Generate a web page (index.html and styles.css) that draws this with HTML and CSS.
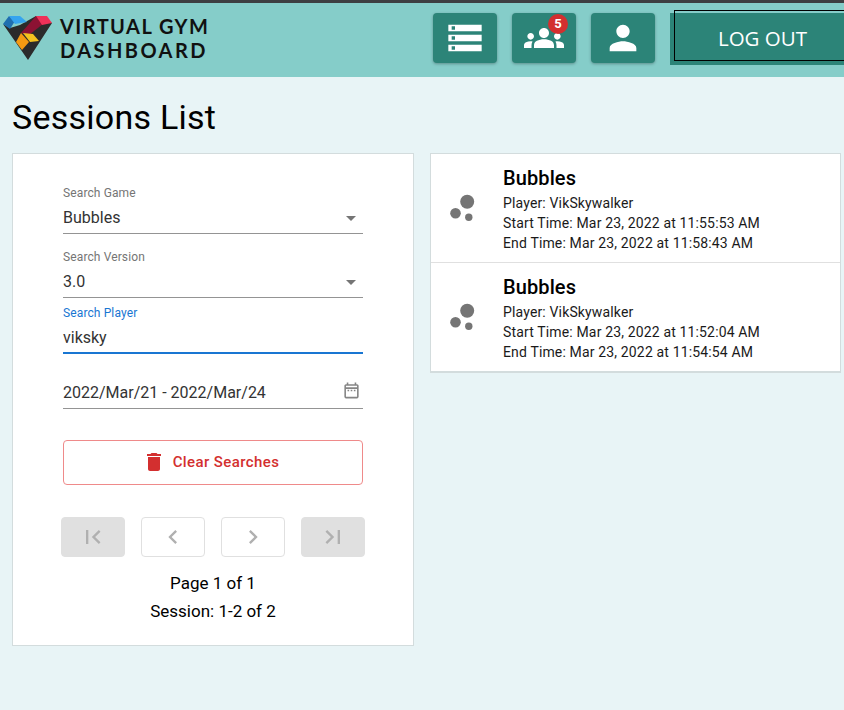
FILE: index.html
```html
<!DOCTYPE html>
<html>
<head>
    <meta charset="utf-8">
    <meta name="viewport" content="width=device-width, initial-scale=1">
    <title>Virtual Gym Dashboard</title>
    <link rel="stylesheet" href="styles.css">
</head>
<body>
    <header>
        <div class="brand">
            <svg class="brand-logo" viewBox="0 0 56 64" width="56" height="64">
                <polygon fill="#2b2b2b" points="3,24 10,28 20,25 36,16 52,23 28,60"/>
                <polygon fill="#1f6fb0" points="3,24 9,16 15,21 10,29"/>
                <polygon fill="#35a4ef" points="9,16 20,16 27,22 15,24"/>
                <polygon fill="#8c1233" points="36,16 43,24 29,35 21,33"/>
                <polygon fill="#ee3158" points="36,16 47,16 52,23 42,25"/>
                <polygon fill="#f59a12" points="21,33 29,42 22,50 16,42"/>
                <polygon fill="#f4c21f" points="23,33 33,34 39,41 30,42"/>
            </svg>
            <div class="brand-name">
                <div class="brand-top">VIRTUAL GYM</div>
                <div class="brand-bottom">DASHBOARD</div>
            </div>
        </div>
        <nav>
            <button class="nav-btn">
                <svg viewBox="0 0 24 24"><path d="M2 20h20v-4H2v4zm2-3h2v2H4v-2zM2 4v4h20V4H2zm4 3H4V5h2v2zm-4 7h20v-4H2v4zm2-3h2v2H4v-2z"/></svg>
            </button>
            <button class="nav-btn">
                <svg viewBox="0 0 24 24"><path d="M12 12.75c1.63 0 3.07.39 4.24.9 1.08.48 1.76 1.56 1.76 2.73V18H6v-1.61c0-1.18.68-2.26 1.76-2.73 1.17-.52 2.61-.91 4.24-.91zM4 13c1.1 0 2-.9 2-2s-.9-2-2-2-2 .9-2 2 .9 2 2 2zm1.13 1.1c-.37-.06-.74-.1-1.13-.1-.99 0-1.93.21-2.78.58C.48 14.9 0 15.62 0 16.43V18h4.5v-1.61c0-.83.23-1.61.63-2.29zM20 13c1.1 0 2-.9 2-2s-.9-2-2-2-2 .9-2 2 .9 2 2 2zm4 3.43c0-.81-.48-1.53-1.22-1.85-.85-.37-1.79-.58-2.78-.58-.39 0-.76.04-1.13.1.4.68.63 1.46.63 2.29V18H24v-1.57zM12 6c1.66 0 3 1.34 3 3s-1.34 3-3 3-3-1.34-3-3 1.34-3 3-3z"/></svg>
                <span class="badge">5</span>
            </button>
            <button class="nav-btn">
                <svg viewBox="0 0 24 24"><path d="M12 12c2.21 0 4-1.79 4-4s-1.79-4-4-4-4 1.79-4 4 1.79 4 4 4zm0 2c-2.67 0-8 1.34-8 4v2h16v-2c0-2.66-5.33-4-8-4z"/></svg>
            </button>
            <button class="logout">LOG OUT</button>
        </nav>
    </header>

    <main>
        <h1>Sessions List</h1>
        <div class="columns">
            <section class="card filters">
                <div class="field">
                    <label>Search Game</label>
                    <div class="value">
                        <span>Bubbles</span>
                        <svg class="icon" viewBox="0 0 24 24"><path d="M7 10l5 5 5-5z"/></svg>
                    </div>
                </div>
                <div class="field tight">
                    <label>Search Version</label>
                    <div class="value">
                        <span>3.0</span>
                        <svg class="icon" viewBox="0 0 24 24"><path d="M7 10l5 5 5-5z"/></svg>
                    </div>
                </div>
                <div class="field focused">
                    <label>Search Player</label>
                    <div class="value"><span>viksky</span></div>
                </div>
                <div class="field date">
                    <div class="value">
                        <span>2022/Mar/21 - 2022/Mar/24</span>
                        <svg class="icon calendar" viewBox="0 0 24 24"><path d="M7 11h2v2H7v-2zm14-5v14c0 1.1-.9 2-2 2H5c-1.11 0-2-.9-2-2l.01-14c0-1.1.88-2 1.99-2h1V2h2v2h8V2h2v2h1c1.1 0 2 .9 2 2zM5 8h14V6H5v2zm14 12V10H5v10h14zm-4-7h2v-2h-2v2zm-4 0h2v-2h-2v2z"/></svg>
                    </div>
                </div>

                <button class="clear">
                    <svg viewBox="0 0 24 24"><path d="M6 19c0 1.1.9 2 2 2h8c1.1 0 2-.9 2-2V7H6v12zM19 4h-3.5l-1-1h-5l-1 1H5v2h14V4z"/></svg>
                    Clear Searches
                </button>

                <div class="pager">
                    <button class="page-btn filled"><svg viewBox="0 0 24 24"><path d="M18.41 16.59L13.82 12l4.59-4.59L17 6l-6 6 6 6zM6 6h2v12H6z"/></svg></button>
                    <button class="page-btn"><svg viewBox="0 0 24 24"><path d="M15.41 7.41L14 6l-6 6 6 6 1.41-1.41L10.83 12z"/></svg></button>
                    <button class="page-btn"><svg viewBox="0 0 24 24"><path d="M10 6L8.59 7.41 13.17 12l-4.58 4.59L10 18l6-6z"/></svg></button>
                    <button class="page-btn filled"><svg viewBox="0 0 24 24"><path d="M5.59 7.41L10.18 12l-4.59 4.59L7 18l6-6-6-6zM16 6h2v12h-2z"/></svg></button>
                </div>
                <p class="page-info">Page 1 of 1</p>
                <p class="page-info">Session: 1-2 of 2</p>
            </section>

            <section class="card sessions">
                <div class="session">
                    <svg class="bubbles" viewBox="0 0 38 38"><circle cx="24.2" cy="12.7" r="7"/><circle cx="12.5" cy="24.3" r="5.3"/><circle cx="25.8" cy="28.3" r="3.7"/></svg>
                    <div class="session-text">
                        <h2>Bubbles</h2>
                        <p>Player: VikSkywalker</p>
                        <p>Start Time: Mar 23, 2022 at 11:55:53 AM</p>
                        <p>End Time: Mar 23, 2022 at 11:58:43 AM</p>
                    </div>
                </div>
                <div class="session">
                    <svg class="bubbles" viewBox="0 0 38 38"><circle cx="24.2" cy="12.7" r="7"/><circle cx="12.5" cy="24.3" r="5.3"/><circle cx="25.8" cy="28.3" r="3.7"/></svg>
                    <div class="session-text">
                        <h2>Bubbles</h2>
                        <p>Player: VikSkywalker</p>
                        <p>Start Time: Mar 23, 2022 at 11:52:04 AM</p>
                        <p>End Time: Mar 23, 2022 at 11:54:54 AM</p>
                    </div>
                </div>
            </section>
        </div>
    </main>
</body>
</html>
```

FILE: styles.css
```css
html, body {
    height: 100%;
}

body {
    margin: 0;
    background-color: #e8f4f6;
    color: #000;
    font-family: Roboto, sans-serif;
    overflow: hidden;
}

header {
    box-sizing: border-box;
    height: 77px;
    border-top: 3px solid #3d3f42;
    background-color: #85cdc9;
    display: flex;
    overflow: hidden;
}

.brand {
    flex: 0 0 433px;
    display: flex;
    align-items: flex-start;
}

.brand-logo {
    flex: none;
    margin: -3px 4px 0 0;
}

.brand-name {
    font-family: Lato, sans-serif;
    font-weight: 700;
    font-size: 20px;
    line-height: 24px;
    color: #111;
    white-space: nowrap;
    padding-top: 11px;
}

.brand-top {
    letter-spacing: 1.45px;
}

.brand-bottom {
    letter-spacing: 2.45px;
}

nav {
    display: flex;
    gap: 15px;
    align-items: flex-start;
    padding-top: 10px;
}

button {
    font-family: inherit;
    padding: 0;
    cursor: pointer;
}

.nav-btn {
    position: relative;
    flex: none;
    width: 64px;
    height: 50px;
    border: 0;
    border-radius: 4px;
    background-color: #2c8478;
    box-shadow: 0 1px 3px rgba(0,0,0,0.3);
    display: flex;
    align-items: center;
    justify-content: center;
}

.nav-btn svg {
    width: 40px;
    height: 40px;
    fill: #fff;
}

.badge {
    position: absolute;
    top: 1px;
    right: 8px;
    width: 20px;
    height: 20px;
    border-radius: 50%;
    background-color: #d32f2f;
    color: #fff;
    font-size: 13px;
    font-weight: 700;
    line-height: 20px;
    text-align: center;
}

.logout {
    position: relative;
    flex: none;
    width: 185px;
    height: 52px;
    border: 0;
    padding-bottom: 2px;
    background-color: #2c8478;
    color: #fff;
    font-family: "Open Sans", sans-serif;
    font-size: 20.5px;
    text-align: center;
}

/* focus ring sits a little off the button */
.logout::after {
    content: "";
    position: absolute;
    top: -3px;
    left: 4px;
    right: 0;
    bottom: 4px;
    border: 1px solid #000;
}

h1 {
    margin: 20px 0 16px;
    font-size: 34px;
    font-weight: 400;
    line-height: 40px;
    letter-spacing: 0.25px;
}

main {
    padding: 0 3px 0 12px;
}

.columns {
    display: flex;
    gap: 16px;
    align-items: flex-start;
}

.card {
    box-sizing: border-box;
    background-color: #fff;
    border: 1px solid #d3dcdd;
}

.filters {
    flex: 0 0 402px;
    height: 493px;
    padding: 32px 50px 0;
}

.field {
    margin-bottom: 16px;
}

.field.tight {
    margin-bottom: 8px;
}

.field label {
    display: block;
    font-size: 12px;
    line-height: 14px;
    letter-spacing: 0.12px;
    color: #757575;
}

.field .value {
    box-sizing: border-box;
    height: 34px;
    display: flex;
    align-items: center;
    justify-content: space-between;
    border-bottom: 1px solid #949494;
    font-size: 16px;
    color: #333;
    padding-top: 2px;
}

.field.focused {
    margin-bottom: 0;
}

.field.focused label {
    color: #1976d2;
}

.field.focused .value {
    border-bottom: 2px solid #1976d2;
}

.field.date {
    margin: 0;
    padding-top: 21px;
}

.icon {
    width: 24px;
    height: 24px;
    fill: #757575;
    flex: none;
}

.icon.calendar {
    width: 19px;
    height: 19px;
    margin: -4px 2px 0 0;
    fill: #858585;
}

.clear {
    box-sizing: border-box;
    width: 300px;
    height: 45px;
    margin-top: 31px;
    padding: 0 5px 1px 0;
    border: 1px solid #ef8a8a;
    border-radius: 4px;
    background-color: #fff;
    color: #d32f2f;
    font-size: 15px;
    font-weight: 500;
    letter-spacing: 0.4px;
    display: flex;
    align-items: center;
    justify-content: center;
    gap: 7px;
}

.clear svg {
    width: 24px;
    height: 24px;
    fill: #d32f2f;
}

.pager {
    display: flex;
    gap: 16px;
    margin: 32px -2px 12px;
}

.page-btn {
    box-sizing: border-box;
    flex: 0 0 64px;
    height: 40px;
    border: 1px solid #e0e0e0;
    border-radius: 4px;
    background-color: #fff;
    display: flex;
    align-items: center;
    justify-content: center;
}

.page-btn.filled {
    background-color: #e0e0e0;
}

.page-btn svg {
    width: 28px;
    height: 28px;
    fill: #b0b0b0;
}

.page-info {
    margin: 0;
    font-size: 17px;
    line-height: 28px;
    text-align: center;
}

.sessions {
    flex: 0 0 411px;
    border-bottom-width: 2px;
}

.session {
    height: 108px;
    display: flex;
    align-items: center;
    padding-left: 12px;
}

.session + .session {
    border-top: 1px solid #e0e0e0;
}

.bubbles {
    flex: none;
    width: 38px;
    height: 38px;
    fill: #757575;
    margin-right: 22px;
}

.session-text {
    align-self: flex-start;
    padding-top: 10px;
}

.session h2 {
    margin: 0 0 1px;
    font-size: 20px;
    font-weight: 500;
    line-height: 28px;
    letter-spacing: 0.1px;
}

.session p {
    margin: 0;
    font-size: 14px;
    line-height: 20px;
    color: #1a1a1a;
    letter-spacing: 0.15px;
}
```
